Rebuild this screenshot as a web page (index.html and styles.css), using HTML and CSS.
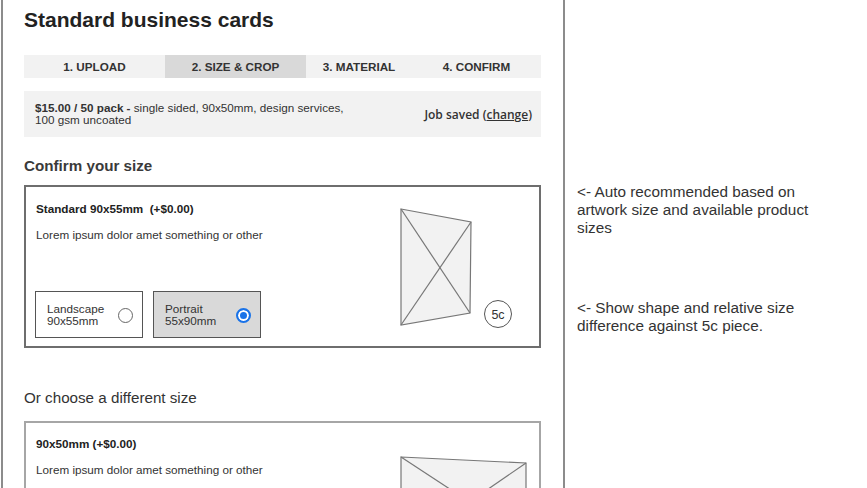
FILE: index.html
```html
<!DOCTYPE html>
<html lang="en">

<head>
    <meta charset="UTF-8" />
    <meta name="viewport" content="width=device-width, initial-scale=1.0" />
    <title>Standard business cards</title>
    <link rel="stylesheet" href="styles.css">
</head>

<body>
    <div class="page">
        <div class="panel">
            <h1 class="title">Standard business cards</h1>

            <div class="steps">
                <div class="step step-1">1. UPLOAD</div>
                <div class="step step-2 active">2. SIZE &amp; CROP</div>
                <div class="step step-3">3. MATERIAL</div>
                <div class="step step-4">4. CONFIRM</div>
            </div>

            <div class="summary">
                <p><b>$15.00 / 50 pack -</b> single sided, 90x50mm, design services,<br>100 gsm uncoated</p>
                <div class="saved">Job saved (<u>change</u>)</div>
            </div>

            <h2 class="section strong">Confirm your size</h2>

            <div class="card card-main">
                <div class="card-body">
                    <div class="card-title">Standard 90x55mm&nbsp; (+$0.00)</div>
                    <div class="card-text">Lorem ipsum dolor amet something or other</div>
                    <div class="options">
                        <div class="option">
                            <span>Landscape<br>90x55mm</span>
                            <span class="radio"></span>
                        </div>
                        <div class="option selected">
                            <span>Portrait<br>55x90mm</span>
                            <span class="radio"></span>
                        </div>
                    </div>
                </div>
                <svg class="preview" width="116" height="122" viewBox="0 0 116 122">
                    <polygon points="3,3 73,16 72,107 3,119" fill="#f2f2f2" stroke="#777" stroke-width="1.2" />
                    <line x1="3" y1="3" x2="72" y2="107" stroke="#777" stroke-width="1.2" />
                    <line x1="73" y1="16" x2="3" y2="119" stroke="#777" stroke-width="1.2" />
                    <circle cx="100" cy="108" r="13.5" fill="#fff" stroke="#555" stroke-width="1" />
                    <text x="100" y="112.5" text-anchor="middle" class="coin">5c</text>
                </svg>
            </div>

            <h2 class="section">Or choose a different size</h2>

            <div class="card card-alt">
                <div class="card-body">
                    <div class="card-title">90x50mm (+$0.00)</div>
                    <div class="card-text">Lorem ipsum dolor amet something or other</div>
                </div>
                <svg class="preview-wide" width="132" height="100" viewBox="0 0 132 100">
                    <polygon points="3,3 128,9 128,85 3,95" fill="#f2f2f2" stroke="#777" stroke-width="1.2" />
                    <line x1="3" y1="3" x2="128" y2="85" stroke="#777" stroke-width="1.2" />
                    <line x1="128" y1="9" x2="3" y2="95" stroke="#777" stroke-width="1.2" />
                </svg>
            </div>
        </div>

        <div class="notes">
            <p class="note">&lt;- Auto recommended based on artwork size and available product sizes</p>
            <p class="note note-shape">&lt;- Show shape and relative size difference against 5c piece.</p>
        </div>
    </div>
</body>

</html>
```

FILE: styles.css
```css
body {
    margin: 0;
    font-family: "Liberation Sans", Arial, sans-serif;
    color: #333;
    background: #fff;
}

.page {
    display: flex;
    height: 488px;
    overflow: hidden;
}

.panel {
    flex-shrink: 0;
    width: 517px;
    margin-left: 1px;
    padding: 8px 22px 0 21px;
    border-left: 2px solid #8c8c8c;
    border-right: 2px solid #8c8c8c;
}

.title {
    margin: 0;
    font-size: 21px;
    line-height: 24px;
    font-weight: bold;
    color: #222;
}

.steps {
    display: flex;
    height: 23px;
    margin-top: 23px;
    background: #f2f2f2;
}

.step {
    display: flex;
    align-items: center;
    justify-content: center;
    font-size: 11.7px;
    font-weight: bold;
    color: #333;
}

.step-1,
.step-2 {
    width: 141px;
}

.step-3 {
    width: 106px;
}

.step-4 {
    width: 129px;
}

.step.active {
    background: #d9d9d9;
}

.summary {
    display: flex;
    align-items: center;
    justify-content: space-between;
    margin-top: 13px;
    padding: 11px 9px 11px 11px;
    background: #f2f2f2;
}

.summary p {
    margin: 0;
    font-size: 11.7px;
    line-height: 12px;
}

.saved {
    font-family: "Open Sans", sans-serif;
    font-weight: 600;
    font-size: 12px;
    color: #333;
}

.section {
    margin: 41px 0 14px;
    font-size: 15.2px;
    line-height: 18px;
    font-weight: normal;
    color: #333;
}

.section.strong {
    margin: 20px 0 10px;
    font-weight: bold;
    color: #3a3a3a;
}

.card {
    display: flex;
    align-items: flex-start;
}

.card-main {
    border: 2px solid #6e6e6e;
}

.card-alt {
    min-height: 120px;
    border: 2px solid #a6a6a6;
}

.card-body {
    flex: 1;
    padding: 15px 10px 8px 10px;
}

.card-alt .card-body {
    padding-top: 14px;
}

.card-title {
    font-size: 11.7px;
    line-height: 14px;
    font-weight: bold;
    color: #222;
}

.card-text {
    margin-top: 12px;
    font-size: 11.7px;
    line-height: 14px;
}

.options {
    display: flex;
    gap: 10px;
    margin-top: 49px;
    margin-left: -1px;
}

.option {
    display: flex;
    align-items: center;
    justify-content: space-between;
    width: 108px;
    height: 47px;
    box-sizing: border-box;
    padding: 1px 9px 0 11px;
    border: 1px solid #555;
    background: #fff;
    font-size: 11.7px;
    line-height: 12px;
}

.option.selected {
    background: #d9d9d9;
}

.radio {
    width: 15px;
    height: 15px;
    box-sizing: border-box;
    border: 1px solid #666;
    border-radius: 50%;
    background: #fff;
}

.selected .radio {
    border: 2px solid #1a73e8;
    background: #1a73e8;
    box-shadow: inset 0 0 0 2px #fff;
}

.preview {
    margin: 19px 25px 0 0;
}

.preview-wide {
    margin: 31px 9px 0 0;
}

.coin {
    font-family: "Liberation Sans", Arial, sans-serif;
    font-size: 12.5px;
    fill: #333;
}

.notes {
    width: 240px;
    margin-left: 12px;
    padding-top: 183px;
}

.note {
    margin: 0;
    font-size: 15.3px;
    line-height: 18px;
    color: #333;
}

.note-shape {
    margin-top: 62px;
}
```
